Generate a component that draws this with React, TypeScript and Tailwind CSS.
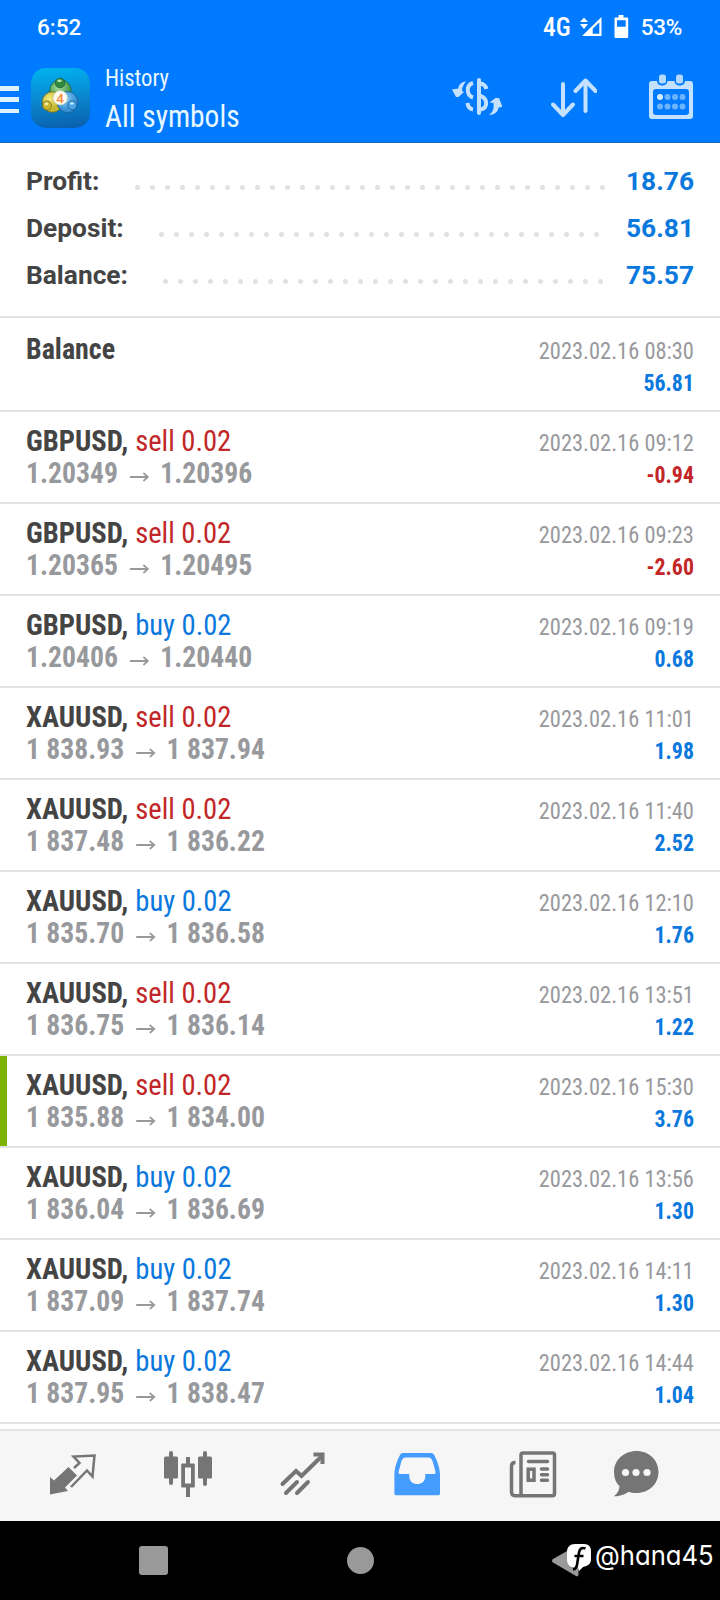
import React from 'react'

interface Deal {
  symbol: string
  side: 'buy' | 'sell'
  open: string
  close: string
  time: string
  profit: string
  marked?: boolean
}

const deals: Deal[] = [
  { symbol: 'GBPUSD', side: 'sell', open: '1.20349', close: '1.20396', time: '2023.02.16 09:12', profit: '-0.94' },
  { symbol: 'GBPUSD', side: 'sell', open: '1.20365', close: '1.20495', time: '2023.02.16 09:23', profit: '-2.60' },
  { symbol: 'GBPUSD', side: 'buy', open: '1.20406', close: '1.20440', time: '2023.02.16 09:19', profit: '0.68' },
  { symbol: 'XAUUSD', side: 'sell', open: '1 838.93', close: '1 837.94', time: '2023.02.16 11:01', profit: '1.98' },
  { symbol: 'XAUUSD', side: 'sell', open: '1 837.48', close: '1 836.22', time: '2023.02.16 11:40', profit: '2.52' },
  { symbol: 'XAUUSD', side: 'buy', open: '1 835.70', close: '1 836.58', time: '2023.02.16 12:10', profit: '1.76' },
  { symbol: 'XAUUSD', side: 'sell', open: '1 836.75', close: '1 836.14', time: '2023.02.16 13:51', profit: '1.22' },
  { symbol: 'XAUUSD', side: 'sell', open: '1 835.88', close: '1 834.00', time: '2023.02.16 15:30', profit: '3.76', marked: true },
  { symbol: 'XAUUSD', side: 'buy', open: '1 836.04', close: '1 836.69', time: '2023.02.16 13:56', profit: '1.30' },
  { symbol: 'XAUUSD', side: 'buy', open: '1 837.09', close: '1 837.74', time: '2023.02.16 14:11', profit: '1.30' },
  { symbol: 'XAUUSD', side: 'buy', open: '1 837.95', close: '1 838.47', time: '2023.02.16 14:44', profit: '1.04' },
]

const summary = [
  { label: 'Profit:', value: '18.76', labelWidth: 'w-[104px]', dotsWidth: 'w-[480px]' },
  { label: 'Deposit:', value: '56.81', labelWidth: 'w-[128px]', dotsWidth: 'w-[450px]' },
  { label: 'Balance:', value: '75.57', labelWidth: 'w-[132px]', dotsWidth: 'w-[450px]' },
]

const StatusBar: React.FC = () => (
  <div className="flex h-[56px] items-start justify-between pr-[38px] pl-[37px] font-['Roboto',sans-serif] text-white">
    <span className="mt-[11px] text-[22.5px] leading-[32px] font-medium">6:52</span>
    <div className="flex items-start">
      <span className="mt-[11px] font-['Roboto_Condensed',sans-serif] text-[25.5px] leading-[32px] font-medium">4G</span>
      <svg className="mt-[16px] ml-[9px]" width="22" height="21" viewBox="0 0 22 21" fill="white">
        <path d="M4 1.5L8 6H0zM4 13L0 8h8z" />
        <path fillRule="evenodd" d="M21.5 1v19H2zM19.3 6.3l-6.6 6.5v5h6.6z" />
      </svg>
      <svg className="mt-[15px] ml-[12px]" width="15" height="23" viewBox="0 0 15 23" fill="white">
        <path fillRule="evenodd" d="M4.5 0h5v2.5h3.5c.8 0 1.2.4 1.2 1.2V21.8c0 .8-.4 1.2-1.2 1.2H1.7c-.8 0-1.2-.4-1.2-1.2V3.7c0-.8.4-1.2 1.2-1.2h2.8zM3 5.2v6.6h8.7V5.2z" />
      </svg>
      <span className="mt-[11px] ml-[12px] text-[22.5px] leading-[32px] font-medium tracking-[-0.3px]">53%</span>
    </div>
  </div>
)

const AppLogo: React.FC = () => (
  <svg className="mt-[12px] ml-[12px]" width="59" height="60" viewBox="0 0 59 60">
    <defs>
      <linearGradient id="tile" x1="0.4" y1="0" x2="0.5" y2="1">
        <stop offset="0" stopColor="#00b0ee" />
        <stop offset="0.5" stopColor="#0a88cf" />
        <stop offset="1" stopColor="#0a62b0" />
      </linearGradient>
      <radialGradient id="gold" cx="0.35" cy="0.35">
        <stop offset="0" stopColor="#f4ec80" />
        <stop offset="1" stopColor="#c4b52e" />
      </radialGradient>
      <radialGradient id="sky" cx="0.4" cy="0.35">
        <stop offset="0" stopColor="#8fd2f7" />
        <stop offset="1" stopColor="#3a92d6" />
      </radialGradient>
      <radialGradient id="leaf" cx="0.4" cy="0.35">
        <stop offset="0" stopColor="#a5de97" />
        <stop offset="1" stopColor="#4b9f54" />
      </radialGradient>
    </defs>
    <rect width="59" height="60" rx="15" fill="url(#tile)" />
    <circle cx="29.5" cy="22.5" r="10.7" fill="url(#leaf)" stroke="#1f5e3c" strokeWidth="0.8" />
    <circle cx="21.5" cy="34" r="10.3" fill="url(#gold)" stroke="#6d6a24" strokeWidth="0.8" />
    <circle cx="36.5" cy="34" r="10.5" fill="url(#sky)" stroke="#145a94" strokeWidth="0.8" />
    <circle cx="29" cy="15" r="4.8" fill="#2f8a3f" stroke="#1f5e3c" strokeWidth="0.8" />
    <ellipse cx="28.5" cy="12.8" rx="2.3" ry="1.4" fill="#b5e3ab" />
    <circle cx="16" cy="37.5" r="4.5" fill="#c9b62c" stroke="#6d6a24" strokeWidth="0.8" />
    <ellipse cx="15.4" cy="35.9" rx="2" ry="1.3" fill="#f5f0a8" />
    <circle cx="41.3" cy="37.2" r="4.5" fill="#4aa6e2" stroke="#145a94" strokeWidth="0.8" />
    <ellipse cx="40.9" cy="35.5" rx="2" ry="1.3" fill="#bfe6fb" />
    <circle cx="29.3" cy="29.8" r="7.2" fill="#fffaf2" stroke="#b9c9b0" strokeWidth="0.6" />
    <text x="29.2" y="34.6" textAnchor="middle" fontFamily="Roboto" fontWeight="500" fontSize="13.5" fill="#f58a3c">4</text>
  </svg>
)

const AppBar: React.FC = () => (
  <div className="flex h-[86px] text-[#e9f8ff]">
    <div className="mt-[30px] flex h-[27px] w-[19px] shrink-0 flex-col justify-between">
      <i className="block h-[4.5px] bg-[#dff4ff]" />
      <i className="block h-[4.5px] bg-[#dff4ff]" />
      <i className="block h-[4.5px] bg-[#dff4ff]" />
    </div>
    <AppLogo />
    <div className="ml-[15px] w-[347px] pt-[4px] font-['Roboto_Condensed',sans-serif]">
      <div className="origin-left scale-x-[0.945] text-[24px] leading-[36px]">History</div>
      <div className="origin-left scale-x-[0.92] text-[32px] leading-[41px]">All symbols</div>
    </div>
    {/* toolbar actions */}
    <svg className="mt-[21px] shrink-0" width="50" height="40" viewBox="0 0 50 40" fill="none" stroke="#c4e2ff" strokeWidth="4">
      <path d="M27 3v33" strokeLinecap="round" />
      <path d="M21 6c-7 2-7 12 0 14.5M15.5 26c.5 4 2.5 6 5.5 6.5" />
      <path d="M28.5 6.5c3 .5 5 2.2 6 5.5M28.5 19c7.5 2.5 7.5 12 0 13.5" />
      <path d="M14 4.5C9 5 6.5 8 6.3 11.5L0 12.5l4 7.5h2.5l5.5-5-2-1c0-4 1.5-6.5 4-9.5z" fill="#c4e2ff" stroke="none" />
      <path d="M37 38c4-3 5-6 4.5-12l-4-.5 6-4.5h3.5l3.5 9-4 .5c0 4-4.5 7.5-9.5 7.5z" fill="#c4e2ff" stroke="none" />
    </svg>
    <svg className="mt-[21px] ml-[49px] shrink-0" width="46" height="41" viewBox="0 0 46 41" fill="none" stroke="#c4e2ff" strokeWidth="4" strokeLinecap="round" strokeLinejoin="round">
      <path d="M12 7v30M2 27.5l10 10.5 10-10.5" />
      <path d="M34.5 34V4M24.5 14l10-10.5L44.5 14" />
    </svg>
    <svg className="mt-[18px] ml-[52px] shrink-0" width="44" height="46" viewBox="0 0 44 46">
      <path fillRule="evenodd" fill="#c4e2ff" d="M3 7h5c0 6 10.5 6 10.5 0h7c0 6 10.5 6 10.5 0h5c2 0 3 1 3 3v32c0 2-1 3-3 3H3c-2 0-3-1-3-3V10c0-2 1-3 3-3zM7 15c-2 0-3 1-3 3v20c0 2 1 3 3 3h30c2 0 3-1 3-3V18c0-2-1-3-3-3z" />
      <rect x="10" y="0.5" width="7" height="9" rx="2.5" fill="#b4d9ff" />
      <rect x="27" y="0.5" width="7" height="9" rx="2.5" fill="#b4d9ff" />
      <circle cx="11" cy="23" r="3" fill="#d6ecff" />
      <g fill="#6db4ff">
        <circle cx="18.5" cy="23" r="3" />
        <circle cx="26" cy="23" r="3" />
        <circle cx="33.5" cy="23" r="3" />
        <circle cx="11" cy="32.5" r="3" />
        <circle cx="18.5" cy="32.5" r="3" />
        <circle cx="26" cy="32.5" r="3" />
        <circle cx="33.5" cy="32.5" r="3" />
      </g>
    </svg>
  </div>
)

const DealRow: React.FC<{ deal: Deal }> = ({ deal }) => (
  <div
    className={`
      flex h-[92px] justify-between border-b-2 border-[#e3e3e3] pt-[13px] pr-[26px] font-['Roboto_Condensed',sans-serif] whitespace-pre
      ${deal.marked ? 'bg-[linear-gradient(to_right,#7cb305_7.5px,transparent_7.5px)]' : ''}
    `}
  >
    <div className="ml-[26px] text-[30.4px] leading-[32px] text-[#444444]">
      <div className="origin-left scale-x-[0.94]">
        <span className="font-bold">{deal.symbol},</span>
        <span className={`ml-[7.5px] ${deal.side === 'sell' ? 'text-[#c22626]' : 'text-[#0a78dd]'}`}>{deal.side} 0.02</span>
      </div>
      <div className="flex origin-left scale-x-[0.91] font-bold text-[#98999c]">
        <span>{deal.open}</span>
        <svg className="mt-[14px] mr-[12px] ml-[13px]" width="21.5" height="12" viewBox="0 0 21.5 12" fill="none" stroke="#98999c" strokeWidth="1.8">
          <path d="M0 6h19.5M15 2l5 4-5 4" />
        </svg>
        <span>{deal.close}</span>
      </div>
    </div>
    <div className="pt-[2px] text-right text-[24px] leading-[32px]">
      <div className="origin-right scale-x-[0.935] text-[#98999c]">{deal.time}</div>
      <div className={`origin-right scale-x-[0.91] font-bold ${deal.profit.startsWith('-') ? 'text-[#c22626]' : 'text-[#0a78dd]'}`}>{deal.profit}</div>
    </div>
  </div>
)

const TabBar: React.FC = () => (
  <div className="flex h-[92px] border-t-2 border-[#e3e3e3] bg-[#f6f6f6] pt-[20px] pl-[49px] text-[#757575]">
    <svg width="48" height="48" viewBox="0 0 48 48">
      <path fill="currentColor" d="M1 26l4 3.5L19.5 16 28 24.5 16 36.5l3 3.5L1 43.5z" />
      <path fill="none" stroke="currentColor" strokeWidth="2.5" d="M25 17l5.5-5-6-6.5L45.5 4.5l-2 21-5.5-6L22 36" />
    </svg>
    <svg className="ml-[67px]" width="48" height="48" viewBox="0 0 48 48" fill="currentColor">
      <rect x="5" y="0" width="4" height="34" rx="2" />
      <rect x="0" y="5.5" width="14" height="22" rx="1.5" />
      <rect x="39" y="0" width="4" height="35" rx="2" />
      <rect x="34" y="5.5" width="14" height="22" rx="1.5" />
      <path fillRule="evenodd" d="M22 6h4v6.5h3.5c.8 0 1.3.5 1.3 1.3v21.5c0 .8-.5 1.3-1.3 1.3H26V46h-4v-9.4h-3.5c-.8 0-1.3-.5-1.3-1.3V13.8c0-.8.5-1.3 1.3-1.3H22zM21 16.5v16h6v-16z" />
    </svg>
    <svg className="ml-[67px]" width="48" height="48" viewBox="0 0 48 48" fill="none" stroke="currentColor" strokeWidth="4" strokeLinecap="round">
      <path d="M3.5 33L17 20l5.5 5L43 5" />
      <path d="M34.5 3.5H43.5V13" strokeLinecap="butt" />
      <path d="M7 42L18 31M18 42L29 31" />
    </svg>
    <svg className="ml-[66px] text-[#459cff]" width="48" height="48" viewBox="0 0 48 48">
      <path fillRule="evenodd" fill="currentColor" d="M10 2h28c1.5 0 2.5.7 3.2 2 2.5 5 5.8 12 5.8 20v18.500c0 1-.8 1.800-1.800 1.800H3.200c-1 0-1.800-.8-1.800-1.800V24C1.400 16 4.500 9 7 4c.6-1.300 1.500-2 3-2zm3 4.500c-2.500 0-3.500 1-4.500 3.500L5.800 20c-.5 2.500-.2 3 1.500 3h9v2.500c0 10 16 10 16 0V23h8.500c1.700 0 2-.5 1.500-3L39.500 10c-1-2.500-2-3.500-4.500-3.500z" />
    </svg>
    <svg className="ml-[68px]" width="48" height="48" viewBox="0 0 48 48" fill="none" stroke="currentColor" strokeWidth="3.5">
      <path d="M6.5 11.5C3.5 11.5 2.5 13 2.5 15v26c0 2.5 1 3.7 3.5 3.7h37.5c1.5 0 2-.5 2-2V4c0-1.5-.5-2-2-2H14c-1.5 0-2 .5-2 2v40" />
      <g strokeLinecap="round">
        <path d="M19.5 10.5h19M32.5 18h6M32.5 23.7h6M32.5 29.3h6" />
      </g>
      <rect x="19.2" y="18.2" width="5.8" height="11" />
    </svg>
    <svg className="ml-[56px]" width="48" height="48" viewBox="0 0 48 48">
      <path fill="currentColor" d="M23.5 0C36 0 45.5 9 45.5 21S36 42 23.5 42c-3 0-6-.5-8-1.3C12 43.5 6 45.5 1 45.3c3.5-3 5.3-6 5.5-10C3 32 1 27 1 21 1 9 11 0 23.5 0z" />
      <g fill="#f6f6f6">
        <circle cx="12.5" cy="21.5" r="3.6" />
        <circle cx="23" cy="21.5" r="3.6" />
        <circle cx="34" cy="21.5" r="3.6" />
      </g>
    </svg>
  </div>
)

const SystemNav: React.FC = () => (
  <div className="relative flex h-[79px] items-start bg-black">
    <div className="mt-[25px] ml-[139px] h-[29px] w-[29px] rounded-[3px] bg-[#999999]" />
    <div className="mt-[26px] ml-[179px] h-[27px] w-[27px] rounded-full bg-[#999999]" />
    <svg className="mt-[24px] ml-[178px]" width="28" height="32" viewBox="0 0 28 32" fill="#999999">
      <path d="M1 14L24 1c1.5-.8 2.5 0 2.5 1.5v27c0 1.5-1 2.3-2.5 1.5L1 17.5c-1.3-.8-1.3-2.5 0-3.5z" />
    </svg>
    {/* author tag lies over the back button */}
    <div className="absolute top-[18px] left-[566px] flex items-start text-white">
      <svg className="mt-[4px]" width="26" height="32" viewBox="0 0 26 32">
        <path fill="white" d="M9 1h9c5 0 7 3 7 7v8c0 5-3 7-8 8l-4 4-1-3.5H9c-5 0-8-3-8-8V9c0-5 3-8 8-8z" />
        <path d="M19.5 5.5c-4-1.5-6 .5-6.5 4L11 22c-.4 2.5-1.5 4-4 4.5M8.5 13h9" fill="none" stroke="black" strokeWidth="2.6" />
      </svg>
      <span className="ml-[3px] origin-left scale-x-[0.95] font-['Inter',sans-serif] text-[27px] leading-[34px] [font-feature-settings:'cv11']">@hana45</span>
    </div>
  </div>
)

const App: React.FC = () => {
  return (
    <div className="flex h-[1600px] w-[720px] flex-col overflow-hidden bg-white">
      <header className="h-[143px] shrink-0 border-b border-[#1068b8] bg-[#007aff]">
        <StatusBar />
        <AppBar />
      </header>

      <section className="h-[175px] shrink-0 border-b-2 border-[#e3e3e3] pt-[15px] font-['Roboto',sans-serif] text-[26.3px] leading-[47px] font-bold">
        {summary.map((row) => (
          <div key={row.label} className="flex h-[47px] pr-[26px] pl-[26px]">
            <span className={`${row.labelWidth} shrink-0 text-[#444444]`}>{row.label}</span>
            <div className={`${row.dotsWidth} mt-[22px] h-[15px] shrink-0 bg-[radial-gradient(circle,#e3e3e3_2.2px,transparent_2.8px)] bg-[length:15px_15px]`} />
            <span className="ml-auto text-[#0a78dd]">{row.value}</span>
          </div>
        ))}
      </section>

      <main className="h-[1111px] shrink-0 overflow-hidden">
        <div className="flex h-[94px] justify-between border-b-2 border-[#e3e3e3] pt-[15px] pr-[26px] pl-[26px] font-['Roboto_Condensed',sans-serif] text-[30.4px] leading-[32px]">
          <span className="h-[32px] origin-left scale-x-[0.92] font-bold text-[#444444]">Balance</span>
          <div className="pt-[2px] text-right text-[24px]">
            <div className="origin-right scale-x-[0.935] text-[#98999c]">2023.02.16 08:30</div>
            <div className="origin-right scale-x-[0.91] font-bold text-[#0a78dd]">56.81</div>
          </div>
        </div>
        {deals.map((deal) => (
          <DealRow key={deal.time} deal={deal} />
        ))}
      </main>

      <TabBar />
      <SystemNav />
    </div>
  )
}

export default App
